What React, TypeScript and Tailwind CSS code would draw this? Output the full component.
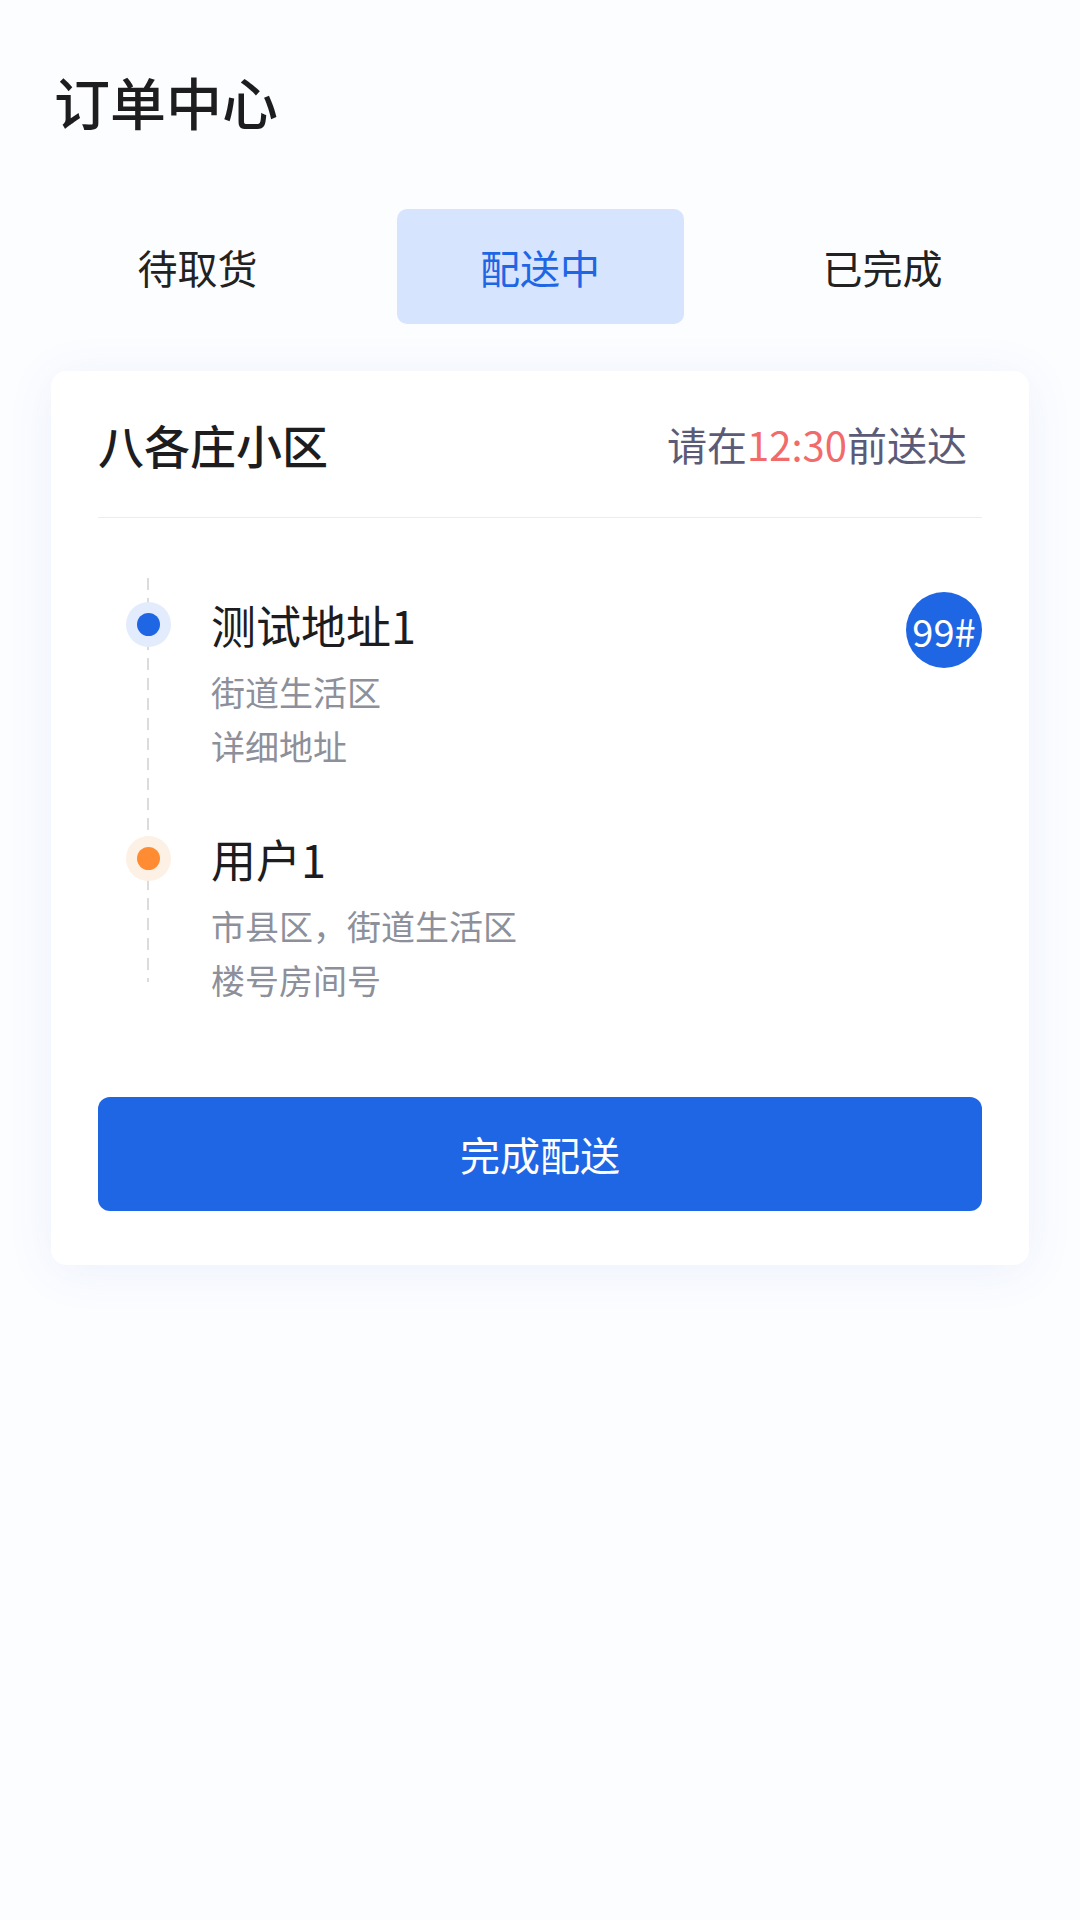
const font = { fontFamily: '"Noto Sans CJK SC", "Noto Sans", sans-serif' };

const tabs = ['待取货', '配送中', '已完成'];

const stops = [
  {
    title: '测试地址1',
    lines: ['街道生活区', '详细地址'],
    dot: 'bg-[#1f66e5]',
    halo: 'bg-[#e3ecfc]',
    badge: '99#',
  },
  {
    title: '用户1',
    lines: ['市县区，街道生活区', '楼号房间号'],
    dot: 'bg-[#ff8b33]',
    halo: 'bg-[#fdf0e5]',
    badge: '',
  },
];

export default function App() {
  const active = 1;

  return (
    <div className="min-h-[1920px] w-[1080px] bg-[#fcfdff] text-[#222]" style={font}>
      <h1 className="pl-[54px] pt-[70px] text-[56px] font-medium leading-[62px] text-[#1d1d1f]">订单中心</h1>

      <div className="mx-[54px] mt-[77px] flex justify-between">
        {tabs.map((tab, i) => (
          <div
            key={tab}
            className={
              i === active
                ? 'flex h-[115px] w-[287px] items-center justify-center rounded-[10px] bg-[#d6e4fd] text-[40px] text-[#1f66e5]'
                : 'flex h-[115px] w-[287px] items-center justify-center text-[40px] text-[#222]'
            }
          >
            {tab}
          </div>
        ))}
      </div>

      <div className="mx-[51px] mt-[47px] rounded-[15px] bg-white px-[47px] pb-[54px] shadow-[0_6px_48px_rgba(40,90,210,0.08)]">
        <div className="flex h-[147px] items-center justify-between border-b border-[#ededf0]">
          <div className="text-[46px] font-medium text-[#1d1d1f]">八各庄小区</div>
          <div className="mr-[15px] text-[40px] text-[#5b5b78]">
            请在<span className="text-[#f26b6b]">12:30</span>前送达
          </div>
        </div>

        <div className="relative pt-[78px]">
          <div className="absolute left-[49px] top-[60px] h-[404px] w-[2px] bg-[repeating-linear-gradient(to_bottom,#dcdcdf_0_12px,transparent_12px_20px)]" />
          <div className="flex flex-col gap-[57px]">
            {stops.map((s) => (
              <div key={s.title} className="relative flex">
                <div className="flex h-[57px] w-[100px] shrink-0 items-center justify-center">
                  <div className={`flex h-[45px] w-[45px] items-center justify-center rounded-full ${s.halo}`}>
                    <div className={`h-[23px] w-[23px] rounded-full ${s.dot}`} />
                  </div>
                </div>
                <div className="ml-[13px] flex-1">
                  <div className="text-[45px] leading-[57px] text-[#1d1d1f]">{s.title}</div>
                  <div className="mt-[12px] text-[34px] leading-[54px] text-[#8d909a]">
                    {s.lines.map((l) => (
                      <div key={l}>{l}</div>
                    ))}
                  </div>
                </div>
                {s.badge && (
                  <div className="mt-[-4px] flex h-[76px] w-[76px] shrink-0 items-center justify-center self-start rounded-full bg-[#1f66e5] text-[38px] text-white">
                    {s.badge}
                  </div>
                )}
              </div>
            ))}
          </div>
        </div>

        <button className="mt-[90px] flex h-[114px] w-full items-center justify-center rounded-[12px] bg-[#1f66e5] text-[40px] text-white">
          完成配送
        </button>
      </div>
    </div>
  );
}
